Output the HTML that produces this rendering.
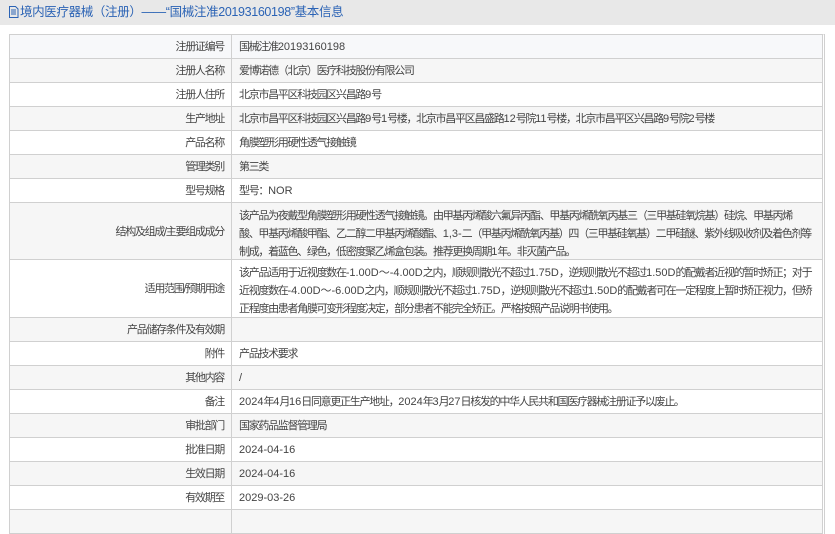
<!DOCTYPE html>
<html><head><meta charset="utf-8"><style>
*{margin:0;padding:0;box-sizing:border-box}
body{width:835px;height:514px;overflow:hidden;background:#fff;font-family:"Liberation Sans","Noto Sans CJK SC",sans-serif;font-size:11px;letter-spacing:-1.3px;color:#444}
i{font-style:normal;letter-spacing:0}
.hd{position:absolute;left:0;top:0;width:835px;height:25px;background:#e8e8e8;color:#2b63b5;font-size:12.5px;letter-spacing:-0.35px;line-height:25px;padding-left:8px;white-space:nowrap}
.hd svg{vertical-align:-2px;margin-right:1px}
.t{position:absolute;left:9px;top:34px;width:816px;border-top:1px solid #d0d0d0;border-left:1px solid #d0d0d0;border-right:3px double #d0d0d0}
.r{display:flex;border-bottom:1px solid #d0d0d0;height:24px;line-height:25px}
.r.g{background:#f6f6f6}
.l{width:222px;text-align:right;padding-right:7px;border-right:1px solid #d0d0d0;flex:none}
.v{padding:0 7px;white-space:nowrap;overflow:hidden;flex:1}
.tall .l{display:flex;align-items:center;justify-content:flex-end;padding-top:2px}
.tall .v{padding:4px 7px 2px;line-height:18px}
</style></head><body>
<div class="hd"><svg width="11" height="12" viewBox="0 0 11 12"><path d="M1.5 .5h6l2.5 2.5v8.5h-8.5z" fill="none" stroke="#2b63b5"/><path d="M3 4h5M3 6h5M3 8h5" stroke="#2b63b5"/></svg>境内医疗器械（注册）——“国械注准20193160198”基本信息</div>
<div class="t">
<div class="r" style="background:#f7f8fa"><div class="l">注册证编号</div><div class="v">国械注准<i>20193160198</i></div></div>
<div class="r g"><div class="l">注册人名称</div><div class="v">爱博诺德（北京）医疗科技股份有限公司</div></div>
<div class="r"><div class="l">注册人住所</div><div class="v">北京市昌平区科技园区兴昌路<i>9</i>号</div></div>
<div class="r g"><div class="l">生产地址</div><div class="v">北京市昌平区科技园区兴昌路<i>9</i>号<i>1</i>号楼，北京市昌平区昌盛路<i>12</i>号院<i>11</i>号楼，北京市昌平区兴昌路<i>9</i>号院<i>2</i>号楼</div></div>
<div class="r"><div class="l">产品名称</div><div class="v">角膜塑形用硬性透气接触镜</div></div>
<div class="r g"><div class="l">管理类别</div><div class="v">第三类</div></div>
<div class="r"><div class="l">型号规格</div><div class="v">型号：<i>NOR</i></div></div>
<div class="r g tall" style="height:57px"><div class="l">结构及组成/主要组成成分</div><div class="v">该产品为夜戴型角膜塑形用硬性透气接触镜。由甲基丙烯酸六氟异丙酯、甲基丙烯酰氧丙基三（三甲基硅氧烷基）硅烷、甲基丙烯<br>酸、甲基丙烯酸甲酯、乙二醇二甲基丙烯酸酯、<i>1,3-</i>二（甲基丙烯酰氧丙基）四（三甲基硅氧基）二甲硅醚、紫外线吸收剂及着色剂等<br>制成，着蓝色、绿色，低密度聚乙烯盒包装。推荐更换周期<i>1</i>年。非灭菌产品。</div></div>
<div class="r tall" style="height:58px"><div class="l">适用范围/预期用途</div><div class="v">该产品适用于近视度数在<i>-1.00D～-4.00D</i>之内，顺规则散光不超过<i>1.75D</i>，逆规则散光不超过<i>1.50D</i>的配戴者近视的暂时矫正；对于<br>近视度数在<i>-4.00D～-6.00D</i>之内，顺规则散光不超过<i>1.75D</i>，逆规则散光不超过<i>1.50D</i>的配戴者可在一定程度上暂时矫正视力，但矫<br>正程度由患者角膜可变形程度决定，部分患者不能完全矫正。严格按照产品说明书使用。</div></div>
<div class="r g"><div class="l">产品储存条件及有效期</div><div class="v"></div></div>
<div class="r"><div class="l">附件</div><div class="v">产品技术要求</div></div>
<div class="r g"><div class="l">其他内容</div><div class="v">/</div></div>
<div class="r"><div class="l">备注</div><div class="v"><i>2024</i>年<i>4</i>月<i>16</i>日同意更正生产地址，<i>2024</i>年<i>3</i>月<i>27</i>日核发的中华人民共和国医疗器械注册证予以废止。</div></div>
<div class="r g"><div class="l">审批部门</div><div class="v">国家药品监督管理局</div></div>
<div class="r"><div class="l">批准日期</div><div class="v"><i>2024-04-16</i></div></div>
<div class="r g"><div class="l">生效日期</div><div class="v"><i>2024-04-16</i></div></div>
<div class="r"><div class="l">有效期至</div><div class="v"><i>2029-03-26</i></div></div>
<div class="r g"><div class="l"></div><div class="v"></div></div>
</div>
</body></html>
